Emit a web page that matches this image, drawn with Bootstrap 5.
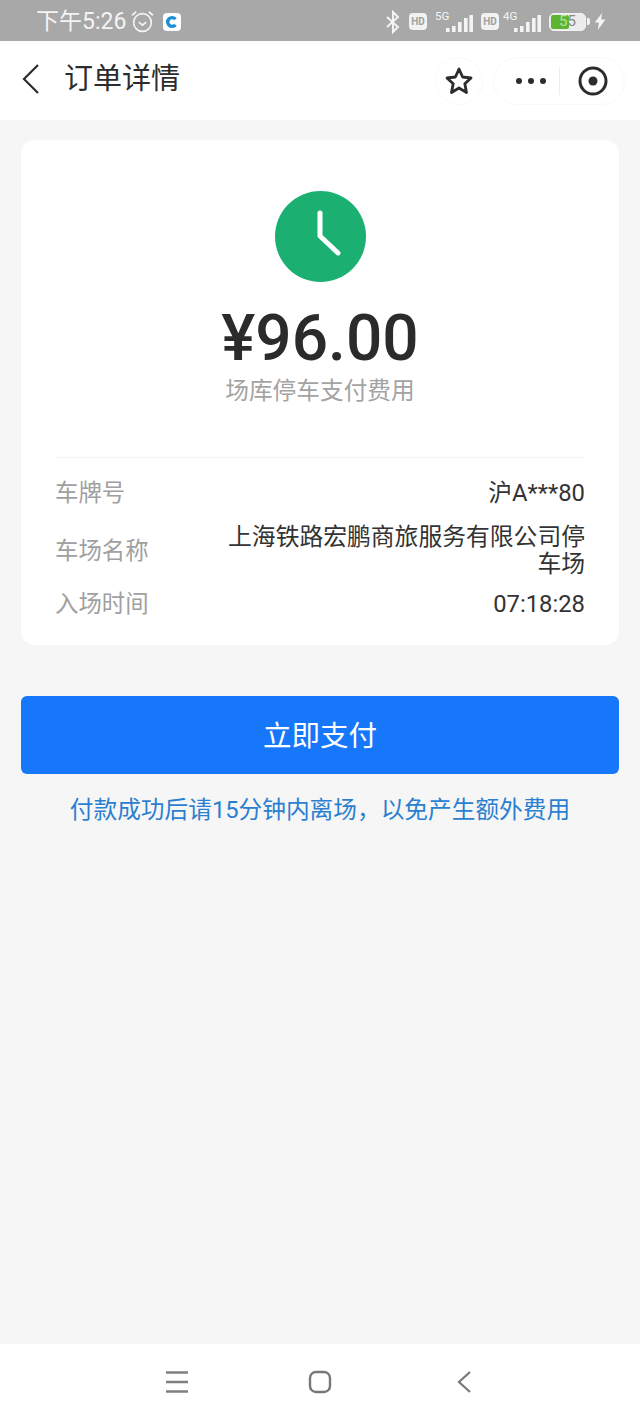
<!DOCTYPE html>
<html lang="zh-CN">
<head>
    <meta charset="UTF-8">
    <meta name="viewport" content="width=device-width, initial-scale=1.0">
    <title>订单详情</title>
    <link href="https://cdn.jsdelivr.net/npm/bootstrap@5.3.0/dist/css/bootstrap.min.css" rel="stylesheet">
    <style>
        body {
            background: #f6f6f6;
            font-family: Roboto, "Noto Sans CJK SC", sans-serif;
            height: 1422px;
            overflow: hidden;
        }
        .status-strip {
            height: 41px;
            background: #a8a8a8;
            color: #f4f4f4;
            padding: 2px 0 0 36px;
        }
        .status-time { font-size: 23px; line-height: 40px; margin-right: 4px; white-space: nowrap; }
        .status-right { margin-left: auto; padding-right: 34px; gap: 8px; }
        .mini-tag {
            font-size: 10px;
            font-weight: 700;
            line-height: 17px;
            width: 18px;
            text-align: center;
            background: #f2f2f2;
            color: #a0a0a0;
            border-radius: 4px;
        }
        .app-tile {
            width: 18px; height: 18px;
            background: #fff;
            border-radius: 4px;
        }
        .net-tag { font-size: 11.5px; line-height: 10px; position: absolute; left: 0; top: 0; }
        .signal-box { position: relative; width: 38px; height: 21px; }
        .signal-box svg { position: absolute; right: 0; bottom: 0; }
        .tight-left { margin-left: -4px; }
        .batt-box {
            position: relative;
            width: 37px; height: 18px;
            border: 1.5px solid #f2f2f2;
            border-radius: 5px;
            background: #ececec;
            font-size: 15px;
            line-height: 15px;
            color: #8a8a8a;
            text-align: center;
        }
        .batt-box::after {
            content: "";
            position: absolute;
            right: -5px; top: 4px;
            width: 3px; height: 7px;
            background: #f2f2f2;
            border-radius: 0 2px 2px 0;
        }
        .batt-fill { position: absolute; left: 1px; top: 1px; bottom: 1px; width: 18px; background: #5cb531; border-radius: 2px; }
        .batt-num { position: relative; }
        .batt-pale { color: #b5e0a0; }
        .title-bar {
            height: 79px;
            background: #fff;
            padding: 0 15px 0 20px;
        }
        .back-arrow { margin-top: -3px; }
        .page-title { font-size: 29px; color: #2c2c2c; margin-left: 22px; line-height: 1; padding-bottom: 2px; }
        .star-pill {
            width: 48px; height: 48px;
            border: 1px solid #f9f9f9;
            border-radius: 50%;
            margin-left: auto;
            margin-right: 10px;
        }
        .menu-pill {
            width: 132px; height: 48px;
            border: 1px solid #f9f9f9;
            border-radius: 24px;
            padding-left: 21px;
        }
        .pill-line { width: 1px; height: 28px; background: #ececec; margin: 0 18px 0 12px; }
        .main-area { padding: 20px 21px 0; }
        .order-card {
            height: 505px;
            background: #fff;
            border: 0;
            border-radius: 14px;
            padding: 51px 34px 0;
        }
        .clock-disc { width: 91px; height: 91px; display: block; margin: 0 auto; }
        .price-text {
            font-size: 64px;
            font-weight: 500;
            line-height: 72px;
            color: #2b2b2b;
            margin-top: 21px;
        }
        .price-sub { font-size: 23.7px; line-height: 34px; color: #a3a3a3; margin-top: -1px; }
        .info-rows { border-top: 1px solid #f4f4f4; margin-top: 49px; padding-top: 18px; }
        .info-line { line-height: 27px; padding: 4px 0; }
        .info-label { color: #a0a0a0; font-size: 23.4px; flex: 0 0 auto; }
        .info-val { color: #333; font-size: 23.8px; text-align: right; width: 360px; }
        .row-gap-a { margin-bottom: 9px; }
        .row-gap-b { margin-bottom: 5px; }
        .pay-btn {
            height: 78px;
            width: 100%;
            margin-top: 51px;
            padding-top: 10px;
            background: #1677fb;
            color: #fff;
            font-size: 28.5px;
            border-radius: 6px;
            border: 0;
        }
        .pay-note { font-size: 23.7px; line-height: 32px; color: #2b7fd0; margin-top: 20px; white-space: nowrap; }
        .soft-nav {
            height: 78px;
            background: #fff;
            padding: 0 0 2px 165px;
        }
        .nav-home { margin-left: 119px; }
        .nav-back { margin-left: 124px; }
    </style>
</head>
<body class="d-flex flex-column">
    <div class="status-strip d-flex align-items-center">
        <span class="status-time">下午5:26</span>
        <svg width="25" height="25" viewBox="0 0 24 24" fill="none" stroke="#f4f4f4" stroke-width="1.6" class="me-2">
            <circle cx="12" cy="13" r="8.5"/>
            <path d="M8.5 12.5 12 15.5 15.5 12.5M2 6 6 2.5M22 6 18 2.5"/>
        </svg>
        <span class="app-tile d-flex align-items-center justify-content-center">
            <svg width="14" height="14" viewBox="0 0 14 14" fill="none" stroke="#1b8fd6" stroke-width="3.4">
                <path d="M10.5 4.2A4.4 4.4 0 1 0 10.5 9.8"/>
            </svg>
        </span>
        <div class="status-right d-flex align-items-center">
            <svg width="16" height="24" viewBox="0 0 16 24" fill="none" stroke="#f4f4f4" stroke-width="2">
                <path d="M2 7 13 17 8 22V2L13 7 2 17"/>
            </svg>
            <span class="mini-tag">HD</span>
            <div class="signal-box">
                <span class="net-tag">5G</span>
                <svg width="27" height="17" viewBox="0 0 27 17" fill="#f4f4f4"><rect x="0" y="13" width="3.6" height="4"/><rect x="6" y="11" width="3.6" height="6"/><rect x="12" y="7" width="3.6" height="10"/><rect x="18" y="3" width="3.6" height="14"/><rect x="23.4" y="0" width="3.6" height="17"/></svg>
            </div>
            <span class="mini-tag">HD</span>
            <div class="signal-box tight-left">
                <span class="net-tag">4G</span>
                <svg width="27" height="17" viewBox="0 0 27 17" fill="#f4f4f4"><rect x="0" y="13" width="3.6" height="4"/><rect x="6" y="11" width="3.6" height="6"/><rect x="12" y="7" width="3.6" height="10"/><rect x="18" y="3" width="3.6" height="14"/><rect x="23.4" y="0" width="3.6" height="17"/></svg>
            </div>
            <div class="batt-box"><span class="batt-fill"></span><span class="batt-num batt-pale">5</span><span class="batt-num">5</span></div>
            <svg width="12" height="17" viewBox="0 0 10 16" fill="#f4f4f4"><path d="M7 0 0 9H4L3 16 10 6H6Z"/></svg>
        </div>
    </div>

    <div class="title-bar d-flex align-items-center">
        <svg class="back-arrow" width="22" height="32" viewBox="0 0 22 32" fill="none" stroke="#2c2c2c" stroke-width="2.2">
            <path d="M18 2 4 16 18 30"/>
        </svg>
        <span class="page-title">订单详情</span>
        <div class="star-pill d-flex align-items-center justify-content-center">
            <svg width="30" height="30" viewBox="0 0 30 30" fill="none" stroke="#2c2c2c" stroke-width="2.8" stroke-linejoin="round">
                <path d="M15 3 18.6 11 27 12 20.8 17.8 22.5 26.5 15 22 7.5 26.5 9.2 17.8 3 12 11.4 11Z"/>
            </svg>
        </div>
        <div class="menu-pill d-flex align-items-center">
            <svg width="32" height="8" viewBox="0 0 32 8" fill="#2c2c2c">
                <circle cx="4" cy="4" r="3"/><circle cx="16" cy="4" r="3"/><circle cx="28" cy="4" r="3"/>
            </svg>
            <span class="pill-line"></span>
            <svg width="30" height="30" viewBox="0 0 30 30" fill="none" stroke="#2c2c2c" stroke-width="3">
                <circle cx="15" cy="15" r="13"/><circle cx="15" cy="15" r="4.5" fill="#2c2c2c" stroke="none"/>
            </svg>
        </div>
    </div>

    <div class="main-area flex-grow-1">
        <div class="card order-card">
            <svg class="clock-disc" viewBox="0 0 91 91">
                <circle cx="45.5" cy="45.5" r="45.5" fill="#1bb071"/>
                <path d="M45 22V45L63 62" fill="none" stroke="#fff" stroke-width="5" stroke-linecap="round" stroke-linejoin="round"/>
            </svg>
            <div class="price-text text-center">¥96.00</div>
            <div class="price-sub text-center">场库停车支付费用</div>
            <div class="info-rows">
                <div class="info-line d-flex justify-content-between align-items-center row-gap-a">
                    <span class="info-label">车牌号</span>
                    <span class="info-val">沪A***80</span>
                </div>
                <div class="info-line d-flex justify-content-between align-items-center row-gap-b">
                    <span class="info-label">车场名称</span>
                    <span class="info-val">上海铁路宏鹏商旅服务有限公司停车场</span>
                </div>
                <div class="info-line d-flex justify-content-between align-items-center">
                    <span class="info-label">入场时间</span>
                    <span class="info-val">07:18:28</span>
                </div>
            </div>
        </div>
        <button type="button" class="btn pay-btn">立即支付</button>
        <div class="pay-note text-center">付款成功后请15分钟内离场，以免产生额外费用</div>
    </div>

    <div class="soft-nav d-flex align-items-center">
        <svg width="24" height="24" viewBox="0 0 24 24" stroke="#808080" stroke-width="2.4">
            <path d="M1 2.5H23M1 12H23M1 21.5H23"/>
        </svg>
        <svg class="nav-home" width="24" height="24" viewBox="0 0 24 24" fill="none" stroke="#777" stroke-width="2.4">
            <rect x="2" y="2" width="20" height="20" rx="6"/>
        </svg>
        <svg class="nav-back" width="16" height="24" viewBox="0 0 16 24" fill="none" stroke="#777" stroke-width="2.2">
            <path d="M14 2 3 12 14 22"/>
        </svg>
    </div>
</body>
</html>
